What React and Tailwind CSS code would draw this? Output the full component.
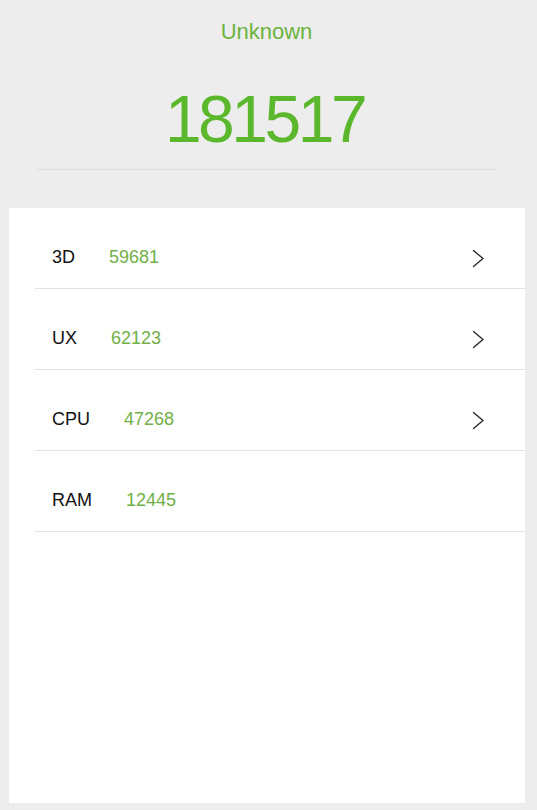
import React from "react";

const rows = [
  { label: "3D", score: "59681", more: true },
  { label: "UX", score: "62123", more: true },
  { label: "CPU", score: "47268", more: true },
  { label: "RAM", score: "12445", more: false },
];

function Chevron() {
  return (
    <svg width="13" height="19" viewBox="0 0 13 19" fill="none" className="mt-[3px]">
      <polyline
        points="1.5,1.5 11,9.5 1.5,17.5"
        stroke="#2b2b2b"
        strokeWidth="1.4"
        strokeLinecap="round"
        strokeLinejoin="round"
      />
    </svg>
  );
}

export default function App() {
  return (
    <div
      className="flex h-[810px] w-[537px] flex-col overflow-hidden bg-[#ededed]"
      style={{ fontFamily: '"Liberation Sans", Arial, sans-serif' }}
    >
      {/* header: device name + total score */}
      <div className="pr-[4px] pt-[21px] text-center text-[22px] leading-[22px] text-[#6cb33f]">
        Unknown
      </div>
      <div className="mt-[43px] pr-[8px] text-center text-[66px] leading-[66px] tracking-[-3.5px] text-[#5bb72c]">
        181517
      </div>
      <div className="ml-[37px] mr-[40px] mt-[17px] h-px bg-[#dedede]" />

      {/* sub scores */}
      <div className="mb-[7px] ml-[9px] mr-[12px] mt-[38px] flex-1 bg-white">
        {rows.map((row) => (
          <div
            key={row.label}
            className="ml-[26px] flex h-[81px] items-center border-b border-[#e3e3e3] pl-[17px] pr-[40px] pt-[18px]"
          >
            <span className="text-[18px] text-[#111]">{row.label}</span>
            <span className="ml-[34px] text-[18px] text-[#71b046]">
              {row.score}
            </span>
            <span className="flex-1" />
            {row.more && <Chevron />}
          </div>
        ))}
      </div>
    </div>
  );
}
